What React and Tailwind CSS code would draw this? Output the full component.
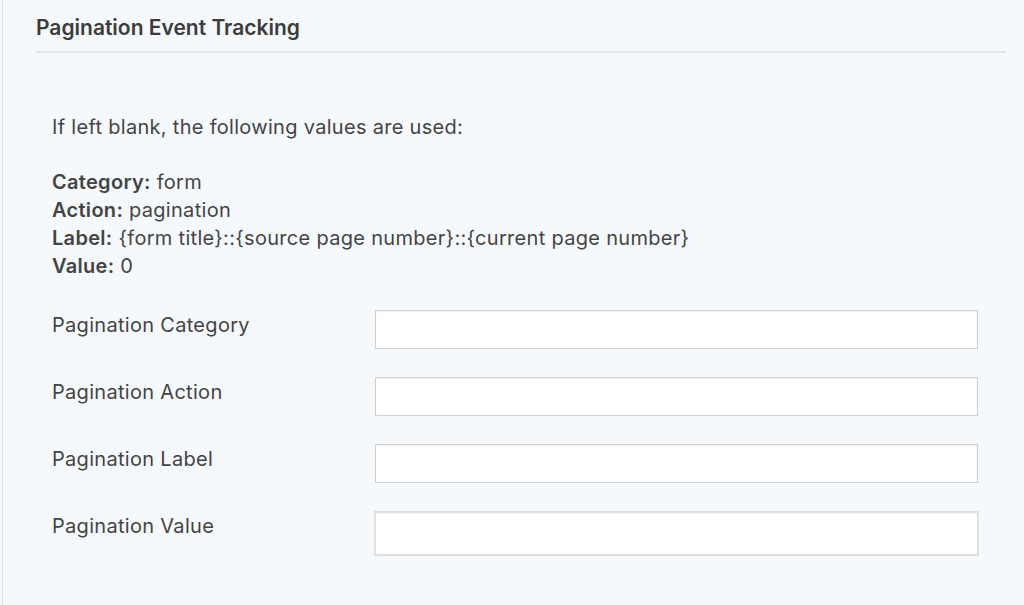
import React from 'react';

const fields = [
  'Pagination Category',
  'Pagination Action',
  'Pagination Label',
];

const App = () => {
  return (
    <div
      className="w-[1024px] h-[605px] bg-[#f5f9fc] overflow-hidden text-[#444444]"
      style={{ fontFamily: 'Inter, "Noto Sans", sans-serif' }}
    >
      <div className="ml-[2px] h-full border-l border-[#dcdfe2] pl-[33px] pr-[18px]">
        {/* Header */}
        <div className="pt-[14px] pb-[9px] border-b-2 border-[#e2e4e6]">
          <h2 className="text-[21px] font-semibold leading-[28px] text-[#3c3c3c]">
            Pagination Event Tracking
          </h2>
        </div>

        <div className="pl-[16px] pr-[28px] tracking-[0.3px]">
          <p className="mt-[60px] text-[20px] leading-[28px]">
            If left blank, the following values are used:
          </p>

          <div className="mt-[27px] text-[20px] leading-[28px]">
            <div><span className="font-semibold">Category:</span> form</div>
            <div><span className="font-semibold">Action:</span> pagination</div>
            <div>
              <span className="font-semibold">Label:</span> {'{form title}::{source page number}::{current page number}'}
            </div>
            <div><span className="font-semibold">Value:</span> 0</div>
          </div>

          <div className="mt-[30px] flex flex-col gap-[28px]">
            {fields.map((f) => (
              <div key={f} className="flex items-start">
                <label className="w-[323px] text-[20px] leading-[30px]">{f}</label>
                <input
                  type="text"
                  className="flex-1 h-[39px] bg-white border border-[#cfcfcf] shadow-[inset_0_1px_2px_rgba(0,0,0,0.06)] outline-none"
                />
              </div>
            ))}
            <div className="flex items-start">
              <label className="w-[322px] text-[20px] leading-[30px]">Pagination Value</label>
              <input
                type="text"
                className="flex-1 -mr-[1px] h-[45px] bg-white border-2 border-[#e0e0e0] shadow-[inset_0_1px_2px_rgba(0,0,0,0.06)] outline-none"
              />
            </div>
          </div>
        </div>
      </div>
    </div>
  );
};

export default App;
